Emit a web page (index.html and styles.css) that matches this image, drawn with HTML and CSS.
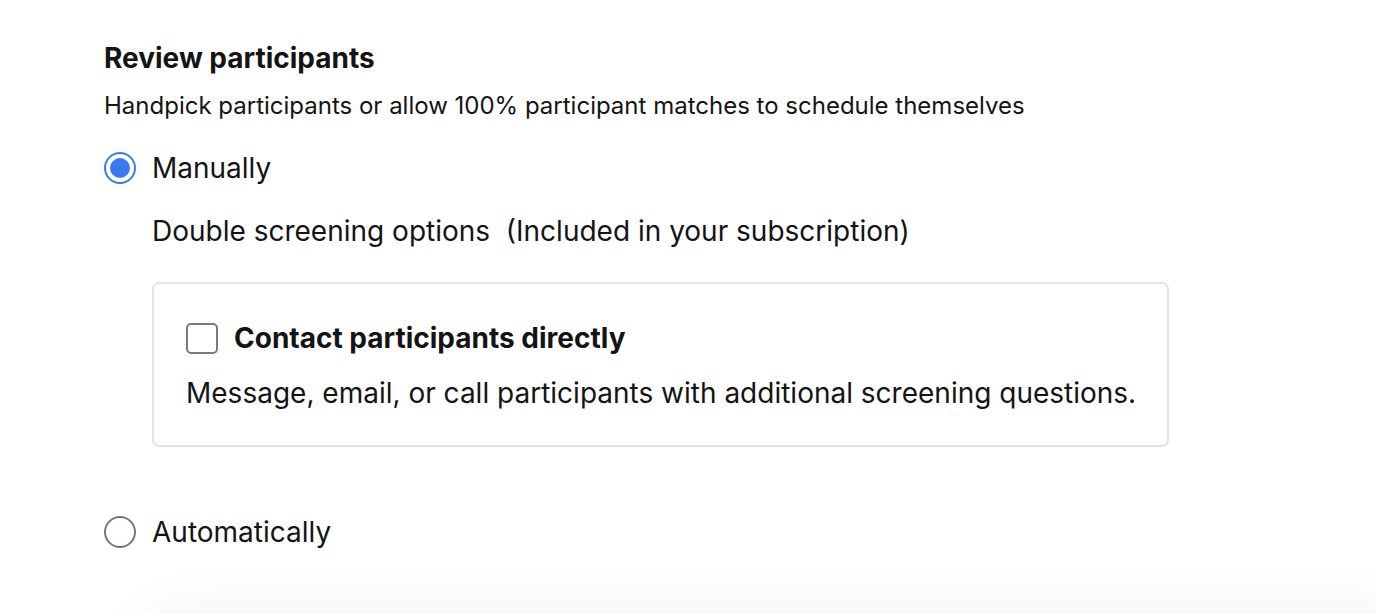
FILE: index.html
```html
<!DOCTYPE html>
<html lang="en">
<head>
<meta charset="utf-8">
<title>Review participants</title>
<link rel="stylesheet" href="styles.css">
</head>
<body>
<main class="page">
  <h2 class="title">Review participants</h2>
  <p class="subtitle">Handpick participants or allow 100% participant matches to schedule themselves</p>

  <div class="option">
    <span class="radio radio-on"><span class="radio-dot"></span></span>
    <span class="option-label">Manually</span>
  </div>

  <div class="details">
    <p class="details-head">Double screening options&nbsp; (Included in your subscription)</p>
    <div class="card">
      <div class="check-row">
        <span class="checkbox"></span>
        <span class="check-label">Contact participants directly</span>
      </div>
      <p class="card-text">Message, email, or call participants with additional screening questions.</p>
    </div>
  </div>

  <div class="option option-auto">
    <span class="radio"></span>
    <span class="option-label">Automatically</span>
  </div>
</main>
<div class="footer-shadow"></div>
</body>
</html>
```
FILE: styles.css
```css
html, body {
  margin: 0;
  padding: 0;
  background: #ffffff;
  overflow: hidden;
}

body {
  font-family: Inter, "Liberation Sans", sans-serif;
  color: #141414;
  height: 614px;
}

.page {
  padding: 40px 0 0 104px;
  display: flex;
  flex-direction: column;
}

.title {
  margin: 0;
  font-size: 28px;
  line-height: 36px;
  font-weight: 700;
}

.subtitle {
  margin: 16px 0 0;
  font-size: 24px;
  line-height: 28px;
  font-weight: 400;
}

.option {
  margin-top: 32px;
  display: flex;
  align-items: center;
  gap: 16px;
  height: 32px;
}

.option-auto {
  margin-top: 69px;
}

.option-label {
  font-size: 28px;
  line-height: 32px;
}

.radio {
  box-sizing: border-box;
  width: 32px;
  height: 32px;
  border-radius: 50%;
  border: 2px solid #787878;
  display: flex;
  align-items: center;
  justify-content: center;
  flex: none;
}

.radio-on {
  border-color: #3a78f2;
}

.radio-dot {
  width: 20px;
  height: 20px;
  border-radius: 50%;
  background: #3a78f2;
}

.details {
  padding-left: 48px;
  display: flex;
  flex-direction: column;
}

.details-head {
  margin: 31px 0 0;
  font-size: 28px;
  line-height: 32px;
}

.card {
  margin-top: 35px;
  width: 1017px;
  box-sizing: border-box;
  border: 2px solid #e3e3e3;
  border-radius: 7px;
  padding: 38px 32px 36px;
  display: flex;
  flex-direction: column;
  gap: 23px;
}

.check-row {
  display: flex;
  align-items: center;
  gap: 16px;
  height: 32px;
}

.checkbox {
  box-sizing: border-box;
  width: 32px;
  height: 31px;
  border: 2px solid #7a7a7a;
  border-radius: 5px;
  flex: none;
}

.check-label {
  font-size: 28px;
  line-height: 32px;
  font-weight: 700;
}

.card-text {
  margin: 0;
  font-size: 28px;
  line-height: 32px;
  white-space: nowrap;
}

.footer-shadow {
  position: fixed;
  left: 140px;
  right: -40px;
  top: 614px;
  height: 100px;
  border-radius: 40px 0 0 0;
  background: #fff;
  box-shadow: 0 0 60px rgba(0, 0, 0, 0.06);
}
```
